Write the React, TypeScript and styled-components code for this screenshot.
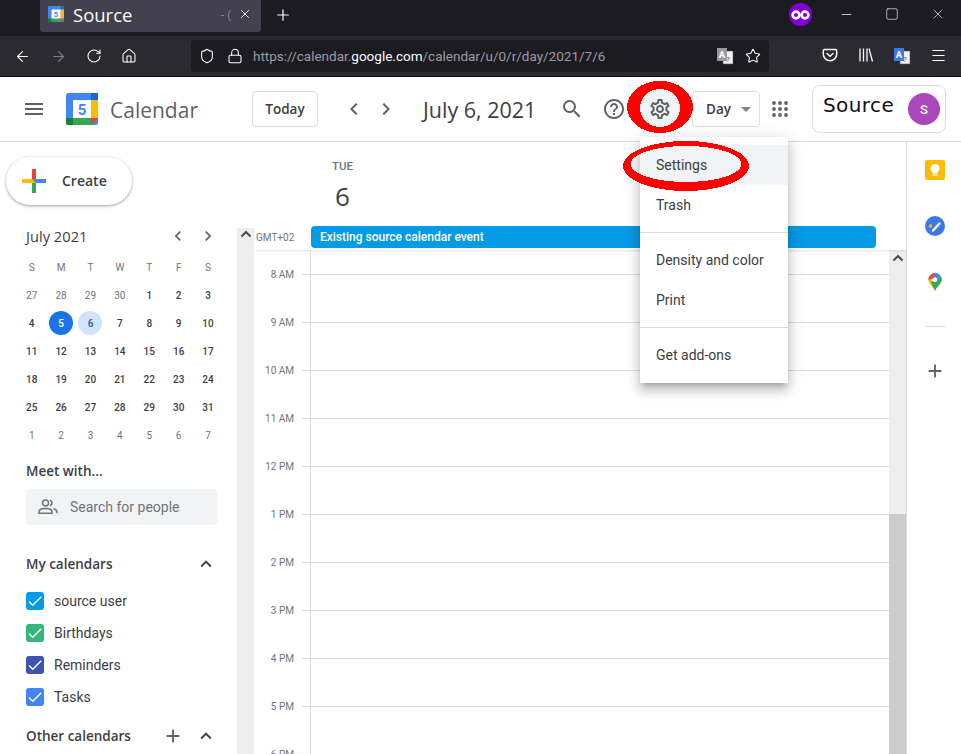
import React from "react";
import styled, { createGlobalStyle } from "styled-components";
import {
  MdMenu, MdSearch, MdHelpOutline, MdOutlineSettings, MdChevronLeft, MdChevronRight,
  MdExpandLess, MdAdd, MdCheck, MdArrowDropDown,
} from "react-icons/md";
import { ArrowLeft, ArrowRight, RotateCw, Home, Shield, Lock, Star, Menu, X, Plus, Minus, Square } from "lucide-react";

const GlobalStyle = createGlobalStyle`
  html, body { margin: 0; padding: 0; background: #fff; }
  body { width: 961px; height: 754px; overflow: hidden; font-family: Roboto, "Liberation Sans", sans-serif; }
  * { box-sizing: border-box; }
`;

const Page = styled.div`
  position: relative; width: 961px; height: 754px; overflow: hidden;
  display: flex; flex-direction: column;
`;

/* Browser chrome */
const TabStrip = styled.div`
  height: 36px; background: #1c1b22; display: flex; align-items: flex-start; padding-left: 40px; color: #fbfbfe;
`;
const Tab = styled.div`
  width: 221px; height: 32px; background: #42414d; border-radius: 0 0 3px 3px;
  display: flex; align-items: center; padding: 0 0 4px 8px;
`;
const TabTitle = styled.span`
  margin: 1px 0 0 9px; font: 400 18.500px "Open Sans", sans-serif; flex: 1; line-height: 28px;
`;
const TabFade = styled.span`
  font: 400 12px "Open Sans", sans-serif; color: #9a99a3; margin-right: 2px; white-space: pre; opacity: .8;
`;
const TabClose = styled.span`display: flex; width: 24px; justify-content: center; margin-right: 4px;`;
const NewTab = styled.span`display: flex; margin: 6px 0 0 13px;`;
const StripRight = styled.div`
  margin-left: auto; display: flex; align-items: center; height: 28px;
`;
const MaskBadge = styled.span`
  width: 23px; height: 23px; border-radius: 50%; background: #8000d7; display: flex; align-items: center; justify-content: center;
  margin-right: 11px; margin-top: 1px;
`;
const WinBtn = styled.span`
  width: 46px; display: flex; justify-content: center;
`;
const NavBar = styled.div`
  height: 41px; background: #2b2a33; border-bottom: 1px solid #0c0c0d; display: flex; align-items: center; color: #fbfbfe;
`;
const NavBtn = styled.span<{ $w: number; $dim?: boolean }>`
  width: ${(p) => p.$w}px; display: flex; justify-content: center; opacity: ${(p) => (p.$dim ? 0.4 : 1)};
`;
const NavBack = styled.div`display: flex; width: 148px; padding-left: 4px;`;
const UrlBar = styled.div`
  margin-left: 43px; width: 578px; height: 32px; background: #1c1b22; border-radius: 4px; display: flex; align-items: center; padding: 0 2px;
`;
const UrlIcon = styled.span`display: flex; width: 28px; justify-content: center;`;
const UrlText = styled.div`
  margin-left: 4px; flex: 1; font: 400 13.500px Roboto, sans-serif; color: #9c9ba3; white-space: nowrap;
  b { font-weight: 400; color: #fbfbfe; }
`;
const NavRight = styled.div`margin-left: 43px; display: flex;`;

/* Calendar header */
const Header = styled.header`
  height: 65px; border-bottom: 1px solid #dadce0; display: flex; align-items: center; background: #fff;
`;
const Burger = styled.span`display: flex; margin-left: 22px; color: #5f6368;`;
const LogoBox = styled.span`display: flex; margin-left: 20px;`;
const Brand = styled.span`
  margin: 1px 0 0 12px; width: 142px; font: 400 21px "Open Sans", sans-serif; color: #5f6368;
`;
const OutlineBtn = styled.div<{ $w: number; $ml?: number }>`
  width: ${(p) => p.$w}px; height: 36px; margin-left: ${(p) => p.$ml ?? 0}px; border: 1px solid #dadce0; border-radius: 4px; display: flex; align-items: center; justify-content: center;
  font: 600 13.500px "Open Sans", sans-serif; color: #3c4043;
`;
const DayLabel = styled.span`margin-left: 12px;`;
const ArrowBtn = styled.span<{ $ml: number }>`display: flex; margin-left: ${(p) => p.$ml}px; color: #5f6368;`;
const DateTitle = styled.span`
  margin: 1px 0 0 25px; width: 136px; font: 400 21.500px "Open Sans", sans-serif; color: #3c4043; white-space: nowrap;
`;
const HeadIcon = styled.span<{ $active?: boolean; $ml: number }>`
  width: 40px; height: 40px; border-radius: 50%; display: flex; align-items: center; justify-content: center; color: #5f6368;
  margin-left: ${(p) => p.$ml}px; background: ${(p) => (p.$active ? "#f1f3f4" : "transparent")};
`;
const Caret = styled.span`display: flex; color: #80868b; margin-left: 3px;`;
const AccountCard = styled.div`
  margin-left: 12px; width: 134px; height: 48px; border: 1px solid #dadce0; border-radius: 8px; display: flex; padding: 0 5px 0 10px;
  align-items: center; justify-content: space-between;
`;
const AccountName = styled.span`font: 400 20px "DejaVu Sans", sans-serif; color: #111; margin-top: -8px; letter-spacing: .4px;`;
const Avatar = styled.span`
  width: 32px; height: 32px; border-radius: 50%; background: #ab47bc; color: #fff; display: flex; align-items: center; justify-content: center;
  font: 500 13px Roboto, sans-serif;
`;

/* Body */
const Body = styled.div`flex: 1; display: flex; min-height: 0;`;
const Sidebar = styled.aside`width: 237px; flex: none; padding: 15px 20px 0 26px; overflow: hidden;`;
const CreateBtn = styled.div`
  width: 126px; height: 48px; margin-left: -20px; border-radius: 24px; background: #fff; display: flex; align-items: center; padding-left: 10px;
  box-shadow: 0 1px 2px 0 rgba(60,64,67,.3), 0 1px 3px 1px rgba(60,64,67,.15);
`;
const CreateLabel = styled.span`margin: -1px 0 0 10px; font: 600 14px "Open Sans", sans-serif; color: #3c4043;`;
const MiniHead = styled.div`
  margin-top: 20px; height: 22px; display: flex; align-items: center; justify-content: space-between; margin-right: -1px;
`;
const MiniTitle = styled.span`font: 500 14.700px "Open Sans", sans-serif; color: #3c4043;`;
const MiniArrows = styled.span`display: flex; gap: 10px; color: #5f6368;`;
const MiniGrid = styled.div`
  margin: 6px 0 0 -9px; width: 206px; display: grid; grid-template-columns: repeat(7, 29.400px); grid-auto-rows: 28px;
`;
const MiniCell = styled.span<{ $kind: string }>`
  display: flex; align-items: center; justify-content: center; font: ${(p) => (p.$kind === "head" || p.$kind === "off" ? 400 : 500)} 10px Roboto, sans-serif;
  color: ${(p) => (p.$kind === "head" || p.$kind === "off" ? "#70757a" : "#3c4043")};
  ${(p) => (p.$kind === "today" ? "color:#fff;" : "")}
  ${(p) => (p.$kind === "sel" ? "color:#185abc;" : "")}
  position: relative;
  z-index: 0;
  &::before {
    content: "";
    ${(p) => (p.$kind === "today" || p.$kind === "sel" ? "" : "display:none;")}
    position: absolute; z-index: -1; width: 24px; height: 24px; border-radius: 50%;
    background: ${(p) => (p.$kind === "today" ? "#1a73e8" : "#d2e3fc")};
  }
`;
const SectionLabel = styled.div<{ $mt: number }>`
  margin-top: ${(p) => p.$mt}px; font: 600 13.500px "Open Sans", sans-serif; color: #3c4043; display: flex; align-items: center; height: 20px;
`;
const SearchBox = styled.div`
  margin-top: 8px; width: 191px; height: 36px; background: #f1f3f4; border-radius: 4px; display: flex; align-items: center; padding-left: 12px; color: #70757a;
  font: 400 14px Roboto, sans-serif;
`;
const SearchLabel = styled.span`margin-left: 12px;`;
const Grow = styled.span`flex: 1;`;
const SectionIcon = styled.span<{ $mr?: number; $soft?: boolean }>`
  display: flex; color: ${(p) => (p.$soft ? "#5f6368" : "#3c4043")}; margin-right: ${(p) => p.$mr ?? 0}px;
`;
const CalList = styled.div`margin-top: 11px; display: flex; flex-direction: column;`;
const CalRow = styled.div`height: 32px; display: flex; align-items: center; font: 400 14px Roboto, sans-serif; color: #3c4043;`;
const CheckBox = styled.span<{ $c: string }>`
  width: 18px; height: 18px; border-radius: 3px; background: ${(p) => p.$c}; color: #fff; display: flex; align-items: center; justify-content: center; margin-right: 10px;
`;

const Main = styled.main`flex: 1; display: flex; min-width: 0;`;
const LeftRail = styled.div`
  width: 17px; margin-top: 86px; background: #eeeeee; display: flex; justify-content: center; align-items: flex-start;
`;
const Content = styled.div`
  width: 653px; border-right: 1px solid #dadce0; display: flex; flex-direction: column; min-height: 0;
`;
const DayHead = styled.div`
  height: 84px; padding: 18px 0 0 78px; display: flex; flex-direction: column; color: #70757a;
`;
const DayName = styled.span`font: 500 11.500px Roboto, sans-serif; line-height: 13px;`;
const DayNum = styled.span`margin: 5px 0 0 3px; font: 400 26px "Open Sans", sans-serif; color: #3c4043; line-height: 36px;`;
const AllDay = styled.div`height: 24px; display: flex; align-items: flex-start; box-shadow: 0 2px 2px -1px rgba(60,64,67,.15); position: relative; z-index: 1;`;
const Gmt = styled.span`
  width: 57px; padding: 6px 0 0 2px; font: 400 10px Roboto, sans-serif; color: #70757a;
`;
const EventBar = styled.div`
  width: 565px; height: 22px; background: #039be5; border-radius: 4px; color: #fff; font: 500 12px/22px Roboto, sans-serif; padding-left: 9px;
`;
const GridArea = styled.div`flex: 1; display: flex; min-height: 0; overflow: hidden;`;
const Timeline = styled.div`flex: 1; min-width: 0;`;
const TimeRow = styled.div<{ $h: number }>`height: ${(p) => p.$h}px; display: flex;`;
const TimeLabel = styled.span`
  width: 40px; text-align: right; font: 400 10px/14px Roboto, sans-serif; color: #70757a; margin-top: -6px; height: 14px; flex: none;
`;
const Tick = styled.span<{ $on: boolean; $w: number }>`
  width: ${(p) => p.$w}px; flex: none; display: flex; justify-content: flex-end;
  &::before { content: ""; width: 8px; height: 1px; background: ${(p) => (p.$on ? "#dadce0" : "transparent")}; }
`;
const Cell = styled.div<{ $line: boolean }>`
  flex: 1; border-left: 1px solid #dadce0; border-top: ${(p) => (p.$line ? "1px solid #dadce0" : "none")};
`;
const Scroll = styled.div`width: 17px; flex: none; display: flex; flex-direction: column; background: #eeeeee;`;
const ScrollTop = styled.div`height: 264px; display: flex; justify-content: center;`;
const ScrollThumb = styled.div`flex: 1; background: #cccccc;`;
const ScrollUp = styled.svg<{ $top: number }>`margin-top: ${(p) => p.$top}px;`;
const SidePanel = styled.div`
  flex: 1; display: flex; flex-direction: column; align-items: center; padding: 18px 0 0 2px;
`;
const PanelIcon = styled.span<{ $h: number }>`display: flex; align-items: flex-start; justify-content: center; height: ${(p) => p.$h}px;`;
const PanelRule = styled.span`width: 20px; height: 1px; background: #dadce0; margin: 0 0 33px;`;
const PanelAdd = styled.span`display: flex; color: #5f6368;`;

/* overlays */
const Dropdown = styled.div`
  position: absolute; left: 640px; top: 137px; width: 148px; height: 246px; background: #fff; padding: 8px 0; z-index: 3;
  box-shadow: 0 8px 10px 1px rgba(0,0,0,.14), 0 3px 14px 2px rgba(0,0,0,.12), 0 5px 5px -3px rgba(0,0,0,.2);
`;
const MenuItem = styled.div<{ $hover?: boolean }>`
  height: 40px; padding-left: 16px; display: flex; align-items: center; font: 400 14px Roboto, sans-serif; color: #3c4043;
  background: ${(p) => (p.$hover ? "#f1f3f4" : "transparent")};
`;
const MenuRule = styled.div`height: 1px; background: #dadce0; margin: 7px 0;`;
const Scribble = styled.svg`position: absolute; left: 0; top: 0; z-index: 4; pointer-events: none;`;

const Logo = ({ s }: { s: number }) => (
  <svg width={s} height={s} viewBox="0 0 32 32">
    <rect x="0" y="0" width="32" height="32" rx="2.5" fill="#4285f4" />
    <rect x="25" y="0" width="7" height="7" fill="#1967d2" />
    <rect x="25" y="7" width="7" height="18" fill="#fbbc04" />
    <rect x="7" y="25" width="18" height="7" fill="#34a853" />
    <path d="M0 25h7v7H2.5A2.5 2.5 0 0 1 0 29.5z" fill="#188038" />
    <path d="M25 25h7l-7 7z" fill="#ea4335" />
    <rect x="7" y="7" width="18" height="18" fill="#fff" />
    <text x="16" y="22" textAnchor="middle" fontFamily="Roboto, sans-serif" fontWeight="700" fontSize="15" fill="#4285f4">5</text>
  </svg>
);

const Translate = ({ blue }: { blue?: boolean }) => (
  <svg width="18" height="18" viewBox="0 0 18 18">
    <rect x="7" y="4" width="10" height="13" fill="#f2f2f2" stroke="#555" strokeWidth=".6" />
    <text x="12" y="14.5" textAnchor="middle" fontSize="8" fill="#555" fontFamily="Roboto, sans-serif">?</text>
    <rect x="1" y="1" width="10" height="13" fill={blue ? "#3b78e7" : "#9a9a9a"} />
    <text x="6" y="11" textAnchor="middle" fontSize="9.5" fontWeight="700" fill="#fff" fontFamily="Roboto, sans-serif">A</text>
  </svg>
);

const Dots = () => (
  <svg width="16" height="16" viewBox="0 0 16 16" fill="#5f6368">
    {[2, 8, 14].flatMap((x) => [2, 8, 14].map((y) => <circle key={`${x}-${y}`} cx={x} cy={y} r="1.9" />))}
  </svg>
);

const GooglePlus = () => (
  <svg width="36" height="36" viewBox="0 0 36 36">
    <rect x="16" y="6" width="4" height="12" fill="#ea4335" />
    <rect x="20" y="16" width="10" height="4" fill="#4285f4" />
    <rect x="16" y="18" width="4" height="12" fill="#34a853" />
    <rect x="6" y="16" width="11" height="4" fill="#fbbc04" />
    <path d="M16 16h4v4z" fill="#4285f4" />
    <path d="M16 16v4h4z" fill="#fbbc04" />
  </svg>
);

const People = () => (
  <svg width="20" height="16" viewBox="0 0 20 16" fill="none" stroke="#70757a" strokeWidth="1.5">
    <circle cx="7.500" cy="4" r="3" />
    <path d="M12 1.200a3 3 0 0 1 0 5.600" strokeWidth="1.700" />
    <path d="M1 14.200v-1.400c0-2 3-3.300 6.500-3.300s6.500 1.300 6.500 3.300v1.400z" />
    <path d="M15.500 9.800c1.900.5 3.500 1.500 3.500 3v1.400" />
  </svg>
);

const Up = ({ top }: { top: number }) => (
  <ScrollUp $top={top} width="12" height="8" viewBox="0 0 12 8" fill="none" stroke="#505050" strokeWidth="2.200">
    <path d="M1.500 6.500L6 2l4.500 4.500" />
  </ScrollUp>
);

const weekHead = ["S", "M", "T", "W", "T", "F", "S"];
const days: [string, string][] = [
  ..."27 28 29 30".split(" ").map((d) => [d, "off"] as [string, string]),
  ...Array.from({ length: 31 }, (_, i) => [String(i + 1), i === 4 ? "today" : i === 5 ? "sel" : "day"] as [string, string]),
  ..."1 2 3 4 5 6 7".split(" ").map((d) => [d, "off"] as [string, string]),
];
const cals: [string, string][] = [
  ["source user", "#039be5"],
  ["Birthdays", "#33b679"],
  ["Reminders", "#3f51b5"],
  ["Tasks", "#4285f4"],
];
const hours = ["8 AM", "9 AM", "10 AM", "11 AM", "12 PM", "1 PM", "2 PM", "3 PM", "4 PM", "5 PM", "6 PM"];

export default function App() {
  return (
    <Page>
      <GlobalStyle />
      <TabStrip>
        <Tab>
          <Logo s={16} />
          <TabTitle>Source</TabTitle>
          <TabFade>- (</TabFade>
          <TabClose><X size={14} strokeWidth={1.6} /></TabClose>
        </Tab>
        <NewTab>
          <Plus size={18} strokeWidth={1.6} />
        </NewTab>
        <StripRight>
          <MaskBadge>
            <svg width="19" height="10" viewBox="0 0 19 10" fill="none" stroke="#fff" strokeWidth="2.6">
              <circle cx="5" cy="5" r="3.4" />
              <circle cx="14" cy="5" r="3.4" />
            </svg>
          </MaskBadge>
          <WinBtn><Minus size={15} strokeWidth={1.2} /></WinBtn>
          <WinBtn><Square size={14} strokeWidth={1.1} /></WinBtn>
          <WinBtn><X size={16} strokeWidth={1} /></WinBtn>
        </StripRight>
      </TabStrip>
      <NavBar>
        <NavBack>
          <NavBtn $w={36}><ArrowLeft size={17} strokeWidth={1.6} /></NavBtn>
          <NavBtn $w={36} $dim><ArrowRight size={17} strokeWidth={1.6} /></NavBtn>
          <NavBtn $w={36}><RotateCw size={16} strokeWidth={1.6} /></NavBtn>
          <NavBtn $w={34}><Home size={16} strokeWidth={1.6} /></NavBtn>
        </NavBack>
        <UrlBar>
          <UrlIcon><Shield size={16} strokeWidth={1.6} /></UrlIcon>
          <UrlIcon><Lock size={16} strokeWidth={1.6} /></UrlIcon>
          <UrlText>https://calendar.<b>google.com</b>/calendar/u/0/r/day/2021/7/6</UrlText>
          <UrlIcon><Translate /></UrlIcon>
          <UrlIcon><Star size={16} strokeWidth={1.6} /></UrlIcon>
        </UrlBar>
        <NavRight>
          <NavBtn $w={36}>
            <svg width="16" height="16" viewBox="0 0 16 16" fill="none" stroke="#fbfbfe" strokeWidth="1.5">
              <path d="M2.5 2.5h11a1.2 1.2 0 0 1 1.2 1.2V7a6.7 6.7 0 0 1-13.4 0V3.700a1.200 1.200 0 0 1 1.200-1.200z" />
              <path d="M5 6.500l3 2.800 3-2.800" strokeLinecap="round" />
            </svg>
          </NavBtn>
          <NavBtn $w={36}>
            <svg width="16" height="16" viewBox="0 0 16 16" fill="none" stroke="#fbfbfe" strokeWidth="1.3">
              <path d="M2 1.500v13M5.500 1.500v13M9 1.500v13M11 1.500l3.500 13" />
            </svg>
          </NavBtn>
          <NavBtn $w={36}><Translate blue /></NavBtn>
          <NavBtn $w={36}><Menu size={17} strokeWidth={1.6} /></NavBtn>
        </NavRight>
      </NavBar>

      <Header>
        <Burger><MdMenu size={24} /></Burger>
        <LogoBox><Logo s={32} /></LogoBox>
        <Brand>Calendar</Brand>
        <OutlineBtn $w={66}>Today</OutlineBtn>
        <ArrowBtn $ml={24}><MdChevronLeft size={24} /></ArrowBtn>
        <ArrowBtn $ml={8}><MdChevronRight size={24} /></ArrowBtn>
        <DateTitle>July 6, 2021</DateTitle>
        <HeadIcon $ml={-7}><MdSearch size={24} /></HeadIcon>
        <HeadIcon $ml={2}><MdHelpOutline size={24} /></HeadIcon>
        <HeadIcon $ml={6} $active><MdOutlineSettings size={24} /></HeadIcon>
        <OutlineBtn $w={68} $ml={12}>
          <DayLabel>Day</DayLabel>
          <Caret><MdArrowDropDown size={24} /></Caret>
        </OutlineBtn>
        <HeadIcon $ml={0}><Dots /></HeadIcon>
        <AccountCard>
          <AccountName>Source</AccountName>
          <Avatar>S</Avatar>
        </AccountCard>
      </Header>

      <Body>
        <Sidebar>
          <CreateBtn>
            <GooglePlus />
            <CreateLabel>Create</CreateLabel>
          </CreateBtn>
          <MiniHead>
            <MiniTitle>July 2021</MiniTitle>
            <MiniArrows><MdChevronLeft size={20} /><MdChevronRight size={20} /></MiniArrows>
          </MiniHead>
          <MiniGrid>
            {weekHead.map((d, i) => <MiniCell key={`h${i}`} $kind="head">{d}</MiniCell>)}
            {days.map(([d, k], i) => <MiniCell key={i} $kind={k}>{d}</MiniCell>)}
          </MiniGrid>
          <SectionLabel $mt={12}>Meet with...</SectionLabel>
          <SearchBox>
            <People />
            <SearchLabel>Search for people</SearchLabel>
          </SearchBox>
          <SectionLabel $mt={29}>
            My calendars
            <Grow />
            <SectionIcon><MdExpandLess size={22} /></SectionIcon>
          </SectionLabel>
          <CalList>
            {cals.map(([n, c]) => (
              <CalRow key={n}>
                <CheckBox $c={c}><MdCheck size={18} /></CheckBox>
                {n}
              </CalRow>
            ))}
          </CalList>
          <SectionLabel $mt={13}>
            Other calendars
            <Grow />
            <SectionIcon $mr={11} $soft><MdAdd size={22} /></SectionIcon>
            <SectionIcon><MdExpandLess size={22} /></SectionIcon>
          </SectionLabel>
        </Sidebar>
        <Main>
          <LeftRail><Up top={2} /></LeftRail>
          <Content>
            <DayHead>
              <DayName>TUE</DayName>
              <DayNum>6</DayNum>
            </DayHead>
            <AllDay>
              <Gmt>GMT+02</Gmt>
              <EventBar>Existing source calendar event</EventBar>
            </AllDay>
            <GridArea>
              <Timeline>
                <TimeRow $h={24}>
                  <Tick $on={false} $w={56} />
                  <Cell $line={false} />
                </TimeRow>
                {hours.map((h) => (
                  <TimeRow key={h} $h={48}>
                    <TimeLabel>{h}</TimeLabel>
                    <Tick $on $w={16} />
                    <Cell $line />
                  </TimeRow>
                ))}
              </Timeline>
              <Scroll>
                <ScrollTop><Up top={4} /></ScrollTop>
                <ScrollThumb />
              </Scroll>
            </GridArea>
          </Content>
          <SidePanel>
            <PanelIcon $h={56}>
              <svg width="20" height="20" viewBox="0 0 20 20">
                <rect width="20" height="20" rx="2" fill="#fbbc04" />
                <circle cx="10" cy="8.500" r="4.500" fill="#fff" />
                <rect x="7.500" y="11" width="5" height="2.500" fill="#fff" />
                <rect x="7.500" y="14.300" width="5" height="1.300" fill="#fff" />
              </svg>
            </PanelIcon>
            <PanelIcon $h={57}>
              <svg width="20" height="20" viewBox="0 0 20 20">
                <circle cx="10" cy="10" r="10" fill="#3b78e7" />
                <circle cx="5.500" cy="10" r="1.800" fill="#fbbc04" />
                <path d="M8 14.500l6.500-7" stroke="#fff" strokeWidth="2.400" fill="none" strokeLinecap="round" />
              </svg>
            </PanelIcon>
            <PanelIcon $h={53}>
              <svg width="14" height="18" viewBox="0 0 14 18">
                <path d="M7 18C5.500 14 .2 10.500.2 6.800L3 4z" fill="#fbbc04" />
                <path d="M2 2.200A6.800 6.800 0 0 0 .2 6.800L5 5.500z" fill="#ea4335" />
                <path d="M2 2.200A6.800 6.800 0 0 1 7 0l3 2.500-5 3z" fill="#ea4335" />
                <path d="M7 0a6.800 6.800 0 0 1 6 3.500L9 5.500 5 3z" fill="#4285f4" />
                <path d="M13 3.500a6.800 6.800 0 0 1 .8 3.300c0 3.700-5.300 7.200-6.800 11.200L3 9l6-3.500z" fill="#34a853" />
                <circle cx="7" cy="6.800" r="2.400" fill="#fff" />
              </svg>
            </PanelIcon>
            <PanelRule />
            <PanelAdd><MdAdd size={22} /></PanelAdd>
          </SidePanel>
        </Main>
      </Body>

      <Dropdown>
        <MenuItem $hover>Settings</MenuItem>
        <MenuItem>Trash</MenuItem>
        <MenuRule />
        <MenuItem>Density and color</MenuItem>
        <MenuItem>Print</MenuItem>
        <MenuRule />
        <MenuItem>Get add-ons</MenuItem>
      </Dropdown>

      <Scribble width="961" height="754" viewBox="0 0 961 754" fill="#ff0000" shapeRendering="crispEdges">
        <path
          fillRule="evenodd"
          d="M627 107a33 26 0 1 0 66 0a33 26 0 1 0-66 0zM640 108a20 19 0 1 1 40 0a20 19 0 1 1-40 0z"
        />
        <path
          fillRule="evenodd"
          d="M623 166a63 25 0 1 0 126 0a63 25 0 1 0-126 0zM630.500 164a55.500 18 0 1 1 111 0a55.500 18 0 1 1-111 0z"
        />
      </Scribble>
    </Page>
  );
}
